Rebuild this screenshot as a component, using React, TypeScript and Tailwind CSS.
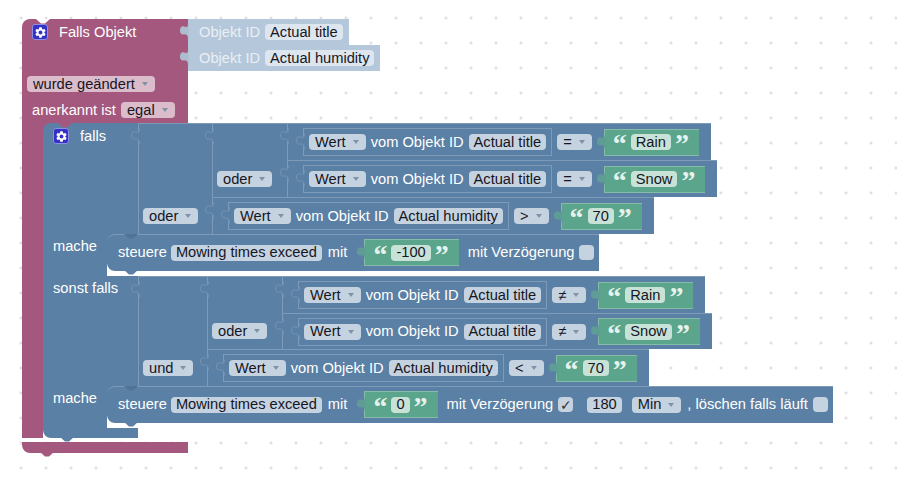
import type { ReactNode } from 'react';
import { MdSettings } from 'react-icons/md';

const BG_TONES = {
  blue: 'bg-[#c5d2e0] text-[#16161f]',
  purple: 'bg-[#dbbccb] text-[#16161f]',
};

function Tab({ className }: { className: string }) {
  return (
    <svg viewBox="0 0 9 17" className={`absolute -left-[8px] top-[4px] h-[17px] w-[9px] ${className}`}>
      <path d="M8.5,0.5 C8.5,10 0.5,-2 0.5,8 C0.5,15 8.5,6 8.5,16.5" />
    </svg>
  );
}

function Notch({ className }: { className: string }) {
  return (
    <svg viewBox="0 0 14 5" className={`absolute h-[5px] w-[14px] ${className}`}>
      <path d="M0,0 L5,4.5 L9,4.5 L14,0 Z" />
    </svg>
  );
}

const blueTab = 'fill-[#5b80a5] stroke-[#7592b0]';

function Gear() {
  return (
    <span className="flex h-4 w-4 shrink-0 items-center justify-center rounded-[3px] border border-[#8d8fe0] bg-[#3531c6] text-white">
      <MdSettings size={13} />
    </span>
  );
}

function Arrow() {
  return (
    <svg viewBox="0 0 6 4" className="h-1 w-[6px] fill-[#7f92a8]">
      <path d="M0,0 H6 L3,4 Z" />
    </svg>
  );
}

function Dropdown({ label, tone = 'blue' }: { label: string; tone?: 'blue' | 'purple' }) {
  return (
    <span className={`flex h-4 items-center gap-[7px] rounded-[4px] pl-[6px] pr-[7px] ${BG_TONES[tone]}`}>
      {label}
      <Arrow />
    </span>
  );
}

function Field({ children }: { children: ReactNode }) {
  return <span className="flex h-4 items-center rounded-[4px] bg-[#c5d2e0] px-[5px] text-[#16161f]">{children}</span>;
}

function Checkbox({ checked }: { checked?: boolean }) {
  return (
    <span className="flex h-[15px] w-[15px] items-center justify-center rounded-[4px] bg-[#c5d2e0] text-[14px] text-[#333] [font-family:'DejaVu_Sans',sans-serif]">
      {checked ? '✓' : ''}
    </span>
  );
}

function Quote({ mark }: { mark: string }) {
  return (
    <span className="flex h-4 w-[12px] justify-center text-[28px] leading-[20px] font-bold text-[#e6f2ed] [font-family:'Liberation_Serif',serif]">
      {mark}
    </span>
  );
}

// green text block, plugs in with its tab on the left
function TextBlock({ value, className = '' }: { value: string; className?: string }) {
  return (
    <div className={`relative flex h-[27px] items-center border-t border-b border-l border-[#86bba9] bg-[#5ba58c] pl-[9px] pr-[11px] ${className}`}>
      <Tab className="fill-[#5f9c96] stroke-[#5f9c96]" />
      <Quote mark="“" />
      <span className="mx-[5px] flex h-4 items-center rounded-[4px] bg-[#c8e2d8] px-[5px] text-[#16161f]">{value}</span>
      <Quote mark="”" />
    </div>
  );
}

// "Wert vom Objekt ID x = text" row
function CompareRow({ id, op, text, short }: { id: string; op: string; text: string; short?: boolean }) {
  return (
    <div className={`relative flex w-fit items-center border-t border-l border-[#7d9bb9] bg-[#5b80a5] pl-[15px] pr-[12px] text-white ${short ? 'h-[36px]' : 'h-[37px]'}`}>
      <Tab className={blueTab} />
      <div className="relative flex h-[28px] items-center gap-[5px] border border-[#7d9bb9] pl-[5px] pr-[5px]">
        <Tab className={blueTab} />
        <Dropdown label="Wert" />
        <span>vom Objekt ID</span>
        <Field>{id}</Field>
      </div>
      <div className="ml-[5px]">
        <Dropdown label={op} />
      </div>
      <TextBlock value={text} className="ml-[12px]" />
    </div>
  );
}

function LogicColumn({ label, className }: { label: string; className: string }) {
  return (
    <div className={`relative flex items-end border-l border-t border-[#7d9bb9] bg-[#5b80a5] pl-[4px] ${className}`}>
      <Tab className={blueTab} />
      <div className="pb-[10px]">
        <Dropdown label={label} />
      </div>
    </div>
  );
}

function ControlBlock({ delay }: { delay?: boolean }) {
  return (
    <div className="bg-[linear-gradient(#5b80a5_50%,transparent_50%)] pb-[5px]">
      <div className="relative flex h-[37px] w-fit items-center rounded-l-[8px] border-t border-[#7d9bb9] bg-[#5b80a5] pb-[1px] pl-[11px] pr-[5px] text-white">
        <Notch className="left-[17px] -top-px fill-[#4f7296]" />
        <Notch className="left-[17px] -bottom-[4px] fill-[#5b80a5]" />
        <span>steuere</span>
        <span className="ml-[4px]">
          <Field>Mowing times exceed</Field>
        </span>
        <span className="ml-[6px]">mit</span>
        <TextBlock value={delay ? '0' : '-100'} className="ml-[17px]" />
        <span className="ml-[9px]">mit Verzögerung</span>
        {delay ? (
          <>
            <span className="ml-[5px]">
              <Checkbox checked />
            </span>
            <span className="ml-[14px]">
              <Field>180</Field>
            </span>
            <span className="ml-[10px]">
              <Dropdown label="Min" />
            </span>
            <span className="ml-[6px]">, löschen falls läuft</span>
            <span className="ml-[5px]">
              <Checkbox />
            </span>
          </>
        ) : (
          <span className="ml-[5px]">
            <Checkbox />
          </span>
        )}
      </div>
    </div>
  );
}

export default function App() {
  return (
    <div className="h-[484px] w-[897px] overflow-hidden bg-white bg-[radial-gradient(circle,#d8d8d8_1px,transparent_1.5px)] bg-[length:25px_25px] bg-[position:8.5px_5.5px] pl-[22px] pt-[19px] text-[14.67px] leading-none [font-family:'Liberation_Sans',Arial,sans-serif]">
      {/* trigger block head */}
      <div className="flex">
        <div className="relative flex h-[104px] w-[166px] flex-col rounded-tl-[8px] bg-[#a5587d] text-white">
          <Notch className="left-[14px] top-0 fill-white" />
          <div className="flex h-[52px] items-start gap-[11px] pl-[10px] pt-[5px]">
            <Gear />
            <span className="pt-[1px]">Falls Objekt</span>
          </div>
          <div className="flex h-[26px] items-center pl-[5px]">
            <Dropdown label="wurde geändert" tone="purple" />
          </div>
          <div className="flex h-[26px] items-center gap-[5px] pl-[10px]">
            <span>anerkannt ist</span>
            <Dropdown label="egal" tone="purple" />
          </div>
        </div>
        <div className="flex flex-col items-start">
          {['Actual title', 'Actual humidity'].map(id => (
            <div key={id} className="relative flex h-[26px] items-center gap-[5px] bg-[#b5c7da] pl-[11px] pr-[6px] text-[#e9eff5]">
              <Tab className="fill-[#aebdcd] stroke-[#aebdcd]" />
              <span>Objekt ID</span>
              <span className="flex h-4 items-center rounded-[4px] bg-[#dde6ef] px-[5px] text-[#16161f]">{id}</span>
            </div>
          ))}
        </div>
      </div>

      <div className="flex">
        <div className="w-[21px] bg-[#a5587d]" />
        <div className="flex flex-col items-start text-white">
          {/* falls */}
          <div className="flex">
            <div className="bg-[#a5587d]">
              <div className="relative flex h-[111px] w-[95px] items-start gap-[11px] rounded-tl-[8px] bg-[#5b80a5] pl-[10px] pt-[5px]">
                <Notch className="left-[15px] top-0 fill-[#a5587d]" />
                <Gear />
                <span className="pt-[1px]">falls</span>
              </div>
            </div>
            <div className="flex">
              <LogicColumn label="oder" className="h-[111px] w-[74px]" />
              <div>
                <div className="flex">
                  <LogicColumn label="oder" className="h-[74px] w-[75px]" />
                  <div>
                    <CompareRow id="Actual title" op="=" text="Rain" />
                    <CompareRow id="Actual title" op="=" text="Snow" />
                  </div>
                </div>
                <CompareRow id="Actual humidity" op=">" text="70" />
              </div>
            </div>
          </div>

          <div className="flex">
            <div className="w-[64px] bg-[#5b80a5] pl-[10px] pt-[5px]">mache</div>
            <ControlBlock />
          </div>

          {/* sonst falls */}
          <div className="flex">
            <div className="h-[110px] w-[95px] bg-[#5b80a5] pl-[10px] pt-[5px]">sonst falls</div>
            <div className="flex">
              <LogicColumn label="und" className="h-[110px] w-[69px]" />
              <div>
                <div className="flex">
                  <LogicColumn label="oder" className="h-[73px] w-[75px]" />
                  <div>
                    <CompareRow id="Actual title" op="≠" text="Rain" />
                    <CompareRow id="Actual title" op="≠" text="Snow" short />
                  </div>
                </div>
                <CompareRow id="Actual humidity" op="<" text="70" />
              </div>
            </div>
          </div>

          <div className="flex">
            <div className="w-[64px] bg-[#5b80a5] pl-[10px] pt-[5px]">mache</div>
            <ControlBlock delay />
          </div>

          {/* foot of the falls block */}
          <div className="relative h-[10px] w-[95px] rounded-bl-[8px] bg-[#5b80a5]">
            <Notch className="left-[17px] -bottom-[4px] fill-[#5b80a5]" />
          </div>
        </div>
      </div>

      {/* bottom of the trigger block */}
      <div className="relative mt-[4px] h-[11px] w-[166px] rounded-bl-[8px] bg-[#a5587d]">
        <Notch className="left-[18px] -bottom-[4px] fill-[#a5587d]" />
      </div>
    </div>
  );
}
